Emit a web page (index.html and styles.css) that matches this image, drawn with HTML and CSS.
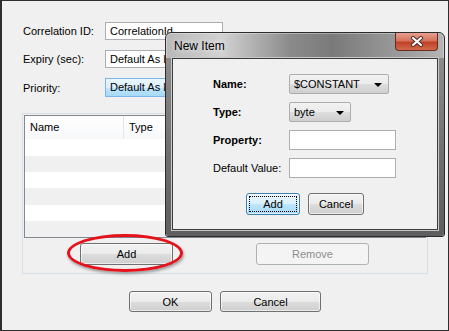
FILE: index.html
```html
<!DOCTYPE html>
<html lang="en">
<head>
  <meta charset="UTF-8">
  <title>Message Properties</title>
  <link rel="stylesheet" href="styles.css">
</head>
<body>
  <div class="window">
    <div class="fields">
      <label>Correlation ID:</label>
      <div class="field">CorrelationId</div>
      <label>Expiry (sec):</label>
      <div class="field">Default As Lifetime</div>
      <label>Priority:</label>
      <div class="field hover">Default As Lifetime</div>
    </div>

    <div class="group">
      <div class="table">
        <div class="table-head">
          <div class="col col-name">Name</div>
          <div class="col">Type</div>
        </div>
        <div class="row"></div>
        <div class="row alt"></div>
        <div class="row"></div>
        <div class="row alt"></div>
        <div class="row"></div>
        <div class="row alt"></div>
      </div>
      <div class="group-actions">
        <button class="btn btn-add">Add</button>
        <button class="btn btn-remove" disabled>Remove</button>
      </div>
    </div>

    <div class="footer">
      <button class="btn btn-ok">OK</button>
      <button class="btn btn-cancel">Cancel</button>
    </div>

    <div class="highlight"></div>

    <div class="dialog">
      <div class="dialog-title">
        <span class="dialog-caption">New Item</span>
        <div class="close">
          <svg width="14" height="11" viewBox="0 0 14 11">
            <path d="M3 2 L11 9 M11 2 L3 9" stroke="#4a2a22" stroke-width="4" stroke-linecap="round"/>
            <path d="M3 2 L11 9 M11 2 L3 9" stroke="#ffffff" stroke-width="2.2" stroke-linecap="round"/>
          </svg>
        </div>
      </div>
      <div class="dialog-body">
        <div class="dialog-content">
          <div class="item-fields">
            <label class="strong">Name:</label>
            <div class="combo combo-name">$CONSTANT<span class="arrow"></span></div>
            <label class="strong">Type:</label>
            <div class="combo combo-type">byte<span class="arrow"></span></div>
            <label class="strong">Property:</label>
            <div class="text"></div>
            <label>Default Value:</label>
            <div class="text"></div>
          </div>
          <div class="dialog-actions">
            <button class="btn btn-focus"><span>Add</span></button>
            <button class="btn btn-dlg-cancel">Cancel</button>
          </div>
        </div>
      </div>
    </div>
  </div>
</body>
</html>
```

FILE: styles.css
```css
body {
  margin: 0;
  font-family: "Liberation Sans", Arial, sans-serif;
  font-size: 11px;
  color: #000;
  background-color: #f0f0f0;
}
.window {
  position: relative;
  width: 449px;
  height: 331px;
  box-sizing: border-box;
  border: 1px solid #2e2e2e;
  border-left-width: 2px;
  background-color: #f0f0f0;
  overflow: hidden;
}
.fields {
  display: grid;
  grid-template-columns: 82px 118px;
  grid-template-rows: 18px 18px 19px;
  row-gap: 10px;
  align-items: center;
  padding: 21px 0 0 21px;
}
.field {
  height: 100%;
  box-sizing: border-box;
  border: 1px solid #abadb3;
  background-color: #fff;
  padding: 0 4px;
  line-height: 16px;
  white-space: nowrap;
  overflow: hidden;
}
.field.hover {
  border-color: #7eb4ea;
  background: linear-gradient(#eaf6fd, #d9f0fc 50%, #bee6fd 51%, #a7d9f5);
  line-height: 17px;
}
.group {
  margin: 16px 0 0 20px;
  width: 406px;
  height: 161px;
  box-sizing: border-box;
  border: 1px solid #d5dfe5;
  padding: 1px;
}
.table {
  height: 123px;
  box-sizing: border-box;
  border: 1px solid #828790;
  background-color: #fff;
}
.table-head {
  display: flex;
  height: 23px;
  align-items: center;
  background: linear-gradient(#ffffff, #f7f8fa);
}
.col {
  padding-left: 5px;
  height: 100%;
  line-height: 23px;
}
.col-name {
  width: 93px;
  border-right: 1px solid #e3e5e8;
}
.row {
  height: 16px;
}
.row:nth-child(2), .row:nth-child(5) {
  height: 17px;
}
.row.alt {
  background-color: #f0f0f0;
}
.group-actions {
  display: flex;
  align-items: flex-start;
  margin-top: 5px;
}
.btn {
  font-family: inherit;
  font-size: 11px;
  color: #000;
  height: 22px;
  padding: 0;
  border: 1px solid #707070;
  border-radius: 3px;
  background: linear-gradient(#f2f2f2, #ebebeb 50%, #dddddd 51%, #cfcfcf);
  box-shadow: inset 0 0 0 1px rgba(255,255,255,0.6);
}
.btn-add {
  width: 93px;
  margin-left: 56px;
}
.btn-remove {
  width: 113px;
  margin-left: 83px;
  color: #8d8d8d;
  border-color: #adb2b5;
  background: #f4f4f4;
  box-shadow: none;
}
.footer {
  display: flex;
  justify-content: center;
  gap: 8px;
  margin-top: 17px;
}
.btn-ok {
  width: 83px;
  height: 21px;
}
.btn-cancel {
  width: 101px;
  height: 21px;
}
.highlight {
  position: absolute;
  left: 65px;
  top: 233px;
  width: 116px;
  height: 38px;
  box-sizing: border-box;
  border: 3px solid #e3121b;
  border-radius: 50%;
  box-shadow: 1px 2px 3px rgba(0,0,0,0.35);
}
.dialog {
  position: absolute;
  left: 163px;
  top: 31px;
  width: 280px;
  height: 205px;
  box-sizing: border-box;
  border: 1px solid #2c2c2c;
  border-radius: 6px 6px 3px 3px;
  background: linear-gradient(90deg, #b8b8b8, #d2d2d2 20%, #8a8a8a 45%, #7a7a7a 60%, #9c9c9c 85%, #b4b4b4);
  display: flex;
  flex-direction: column;
  box-shadow: inset 0 0 0 1px rgba(255,255,255,0.35);
}
.dialog-title {
  display: flex;
  height: 25px;
  padding: 0 6px 0 8px;
}
.dialog-caption {
  font-size: 12px;
  line-height: 26px;
  text-shadow: 0 0 6px rgba(255,255,255,0.9);
}
.close {
  margin-left: auto;
  width: 43px;
  height: 18px;
  box-sizing: border-box;
  border: 1px solid #6b2a1f;
  border-top: none;
  border-radius: 0 0 4px 4px;
  background: linear-gradient(#e8a08e, #d4735d 45%, #c2402a 55%, #d06a4a);
  display: flex;
  align-items: center;
  justify-content: center;
}
.dialog-body {
  flex: 1;
  padding: 0 6px 6px;
  background: linear-gradient(#8c8c8c, #6c6c6c 60%, #5e5e5e);
  border-radius: 0 0 3px 3px;
}
.dialog-content {
  height: 100%;
  box-sizing: border-box;
  border: 1px solid #3c3c3c;
  background-color: #f0f0f0;
  box-shadow: 0 0 0 1px #c9c9c9;
  padding: 15px 0 0 40px;
}
.item-fields {
  display: grid;
  grid-template-columns: 76px auto;
  grid-template-rows: 20px 20px 20px 20px;
  row-gap: 8px;
  align-items: center;
  justify-items: start;
}
.strong {
  font-weight: bold;
}
.combo {
  position: relative;
  height: 20px;
  box-sizing: border-box;
  border: 1px solid #acacac;
  border-radius: 2px;
  background: linear-gradient(#f2f2f2, #ebebeb 50%, #dddddd 51%, #cfcfcf);
  padding-left: 4px;
  line-height: 18px;
}
.combo-name {
  width: 100px;
}
.combo-type {
  width: 62px;
}
.arrow {
  position: absolute;
  right: 6px;
  top: 8px;
  border-left: 4px solid transparent;
  border-right: 4px solid transparent;
  border-top: 4px solid #000;
}
.text {
  width: 107px;
  height: 20px;
  box-sizing: border-box;
  border: 1px solid #abadb3;
  background-color: #fff;
}
.dialog-actions {
  display: flex;
  gap: 8px;
  margin: 15px 0 0 33px;
}
.btn-focus {
  width: 54px;
  border-color: #3c7fb1;
  background: linear-gradient(#eaf6fd, #d9f0fc 50%, #bee6fd 51%, #a7d9f5);
  padding: 2px;
}
.btn-focus span {
  display: block;
  height: 100%;
  box-sizing: border-box;
  border: 1px dotted #000;
  line-height: 14px;
}
.btn-dlg-cancel {
  width: 56px;
}
```
